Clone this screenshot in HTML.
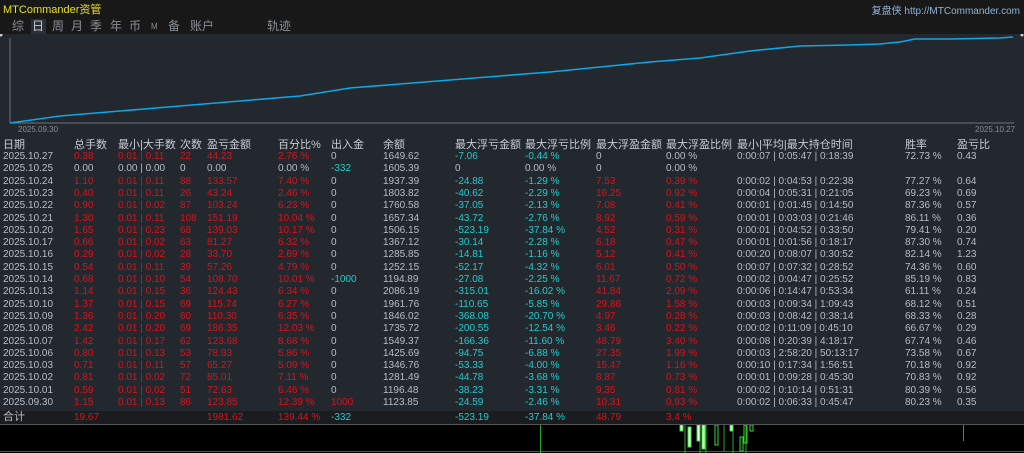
<!DOCTYPE html>
<html><head><meta charset="utf-8"><style>
*{margin:0;padding:0;box-sizing:border-box}
body{width:1024px;height:453px;background:#23272e;font-family:"Liberation Sans","Noto Sans CJK SC",sans-serif;font-size:10px;color:#b8bcc4;position:relative;overflow:hidden}
#top{position:absolute;left:0;top:0;width:1024px;height:34px;background:#181818}
.a{position:absolute;white-space:nowrap}
.t{position:absolute;top:19px;color:#8a8e94;font-size:12px;line-height:15px}
.r{position:absolute;left:0;width:1024px;height:12.3px;line-height:12.3px}
.r span{position:absolute;white-space:nowrap}
.c0{left:3px}.c1{left:74px}.c2{left:118px}.c3{left:180px}.c4{left:207px}.c5{left:278px}.c6{left:331px}.c7{left:383px}.c8{left:455px}.c9{left:525px}.c10{left:596px}.c11{left:666px}.c12{left:737px}.c13{left:905px}.c14{left:957px}
.R{color:#d8141c}.C{color:#22cccc}
.hd{font-size:11px;color:#c8ccd2}
</style></head><body>
<div id="top"></div>
<div class="a" style="left:3px;top:1px;color:#e8e020;font-size:11px">MTCommander资管</div>
<div class="a" style="right:4px;top:2px;color:#8fb4d8;font-size:10px">复盘侠 http://MTCommander.com</div>
<div class="a" style="left:31px;top:19px;width:15px;height:15px;background:#2a3038"></div>
<div class="t" style="left:12px">综</div>
<div class="t" style="left:32px;color:#c8ccd2">日</div>
<div class="t" style="left:52px">周</div>
<div class="t" style="left:71px">月</div>
<div class="t" style="left:90px">季</div>
<div class="t" style="left:110px">年</div>
<div class="t" style="left:129px">币</div>
<div class="t" style="left:151px;font-size:8px">M</div>
<div class="t" style="left:168px">备</div>
<div class="t" style="left:190px">账户</div>
<div class="t" style="left:267px">轨迹</div>
<svg class="a" style="left:0;top:34px" width="1024" height="100">
<line x1="10" y1="4" x2="10" y2="89" stroke="#707478" stroke-width="1"/>
<line x1="10" y1="89" x2="1014" y2="89" stroke="#707478" stroke-width="1"/>
<circle cx="1" cy="1" r="1.5" fill="#ccc"/><circle cx="1022" cy="1" r="1.5" fill="#ccc"/>
<polyline fill="none" stroke="#0aa8e8" stroke-width="1.6" points="10,89 60,82 120,77 180,72 240,67 300,62 350,54 400,50 450,46 500,42 550,38 600,33 650,28 700,24 750,17 800,12 850,11 880,10 900,8 915,5 950,5 1000,4 1013,3"/>
</svg>
<div class="a" style="left:18px;top:125px;color:#8a8e94;font-size:8px">2025.09.30</div>
<div class="a" style="left:975px;top:125px;color:#8a8e94;font-size:8px">2025.10.27</div>

<div class="r hd" style="top:139px"><span class="c0">日期</span><span class="c1">总手数</span><span class="c2">最小|大手数</span><span class="c3">次数</span><span class="c4">盈亏金额</span><span class="c5">百分比%</span><span class="c6">出入金</span><span class="c7">余额</span><span class="c8">最大浮亏金额</span><span class="c9">最大浮亏比例</span><span class="c10">最大浮盈金额</span><span class="c11">最大浮盈比例</span><span class="c12">最小|平均|最大持仓时间</span><span class="c13">胜率</span><span class="c14">盈亏比</span></div>

<div class="r" style="top:151px"><span class="c0">2025.10.27</span><span class="c1 R">0.38</span><span class="c2 R">0.01 | 0.11</span><span class="c3 R">22</span><span class="c4 R">44.23</span><span class="c5 R">2.76 %</span><span class="c6">0</span><span class="c7">1649.62</span><span class="c8 C">-7.06</span><span class="c9 C">-0.44 %</span><span class="c10">0</span><span class="c11">0.00 %</span><span class="c12">0:00:07 | 0:05:47 | 0:18:39</span><span class="c13">72.73 %</span><span class="c14">0.43</span></div>
<div class="r" style="top:163.3px"><span class="c0">2025.10.25</span><span class="c1">0.00</span><span class="c2">0.00 | 0.00</span><span class="c3">0</span><span class="c4">0.00</span><span class="c5">0.00 %</span><span class="c6 C">-332</span><span class="c7">1605.39</span><span class="c8">0</span><span class="c9">0.00 %</span><span class="c10">0</span><span class="c11">0.00 %</span></div>
<div class="r" style="top:175.6px"><span class="c0">2025.10.24</span><span class="c1 R">1.10</span><span class="c2 R">0.01 | 0.11</span><span class="c3 R">88</span><span class="c4 R">133.57</span><span class="c5 R">7.40 %</span><span class="c6">0</span><span class="c7">1937.39</span><span class="c8 C">-24.88</span><span class="c9 C">-1.29 %</span><span class="c10 R">7.53</span><span class="c11 R">0.39 %</span><span class="c12">0:00:02 | 0:04:53 | 0:22:38</span><span class="c13">77.27 %</span><span class="c14">0.64</span></div>
<div class="r" style="top:187.9px"><span class="c0">2025.10.23</span><span class="c1 R">0.40</span><span class="c2 R">0.01 | 0.11</span><span class="c3 R">26</span><span class="c4 R">43.24</span><span class="c5 R">2.46 %</span><span class="c6">0</span><span class="c7">1803.82</span><span class="c8 C">-40.62</span><span class="c9 C">-2.29 %</span><span class="c10 R">16.25</span><span class="c11 R">0.92 %</span><span class="c12">0:00:04 | 0:05:31 | 0:21:05</span><span class="c13">69.23 %</span><span class="c14">0.69</span></div>
<div class="r" style="top:200.2px"><span class="c0">2025.10.22</span><span class="c1 R">0.90</span><span class="c2 R">0.01 | 0.02</span><span class="c3 R">87</span><span class="c4 R">103.24</span><span class="c5 R">6.23 %</span><span class="c6">0</span><span class="c7">1760.58</span><span class="c8 C">-37.05</span><span class="c9 C">-2.13 %</span><span class="c10 R">7.08</span><span class="c11 R">0.41 %</span><span class="c12">0:00:01 | 0:01:45 | 0:14:50</span><span class="c13">87.36 %</span><span class="c14">0.57</span></div>
<div class="r" style="top:212.5px"><span class="c0">2025.10.21</span><span class="c1 R">1.30</span><span class="c2 R">0.01 | 0.11</span><span class="c3 R">108</span><span class="c4 R">151.19</span><span class="c5 R">10.04 %</span><span class="c6">0</span><span class="c7">1657.34</span><span class="c8 C">-43.72</span><span class="c9 C">-2.76 %</span><span class="c10 R">8.92</span><span class="c11 R">0.59 %</span><span class="c12">0:00:01 | 0:03:03 | 0:21:46</span><span class="c13">86.11 %</span><span class="c14">0.36</span></div>
<div class="r" style="top:224.8px"><span class="c0">2025.10.20</span><span class="c1 R">1.65</span><span class="c2 R">0.01 | 0.23</span><span class="c3 R">68</span><span class="c4 R">139.03</span><span class="c5 R">10.17 %</span><span class="c6">0</span><span class="c7">1506.15</span><span class="c8 C">-523.19</span><span class="c9 C">-37.84 %</span><span class="c10 R">4.52</span><span class="c11 R">0.31 %</span><span class="c12">0:00:01 | 0:04:52 | 0:33:50</span><span class="c13">79.41 %</span><span class="c14">0.20</span></div>
<div class="r" style="top:237.1px"><span class="c0">2025.10.17</span><span class="c1 R">0.66</span><span class="c2 R">0.01 | 0.02</span><span class="c3 R">63</span><span class="c4 R">81.27</span><span class="c5 R">6.32 %</span><span class="c6">0</span><span class="c7">1367.12</span><span class="c8 C">-30.14</span><span class="c9 C">-2.28 %</span><span class="c10 R">6.18</span><span class="c11 R">0.47 %</span><span class="c12">0:00:01 | 0:01:56 | 0:18:17</span><span class="c13">87.30 %</span><span class="c14">0.74</span></div>
<div class="r" style="top:249.4px"><span class="c0">2025.10.16</span><span class="c1 R">0.29</span><span class="c2 R">0.01 | 0.02</span><span class="c3 R">28</span><span class="c4 R">33.70</span><span class="c5 R">2.69 %</span><span class="c6">0</span><span class="c7">1285.85</span><span class="c8 C">-14.81</span><span class="c9 C">-1.16 %</span><span class="c10 R">5.12</span><span class="c11 R">0.41 %</span><span class="c12">0:00:20 | 0:08:07 | 0:30:52</span><span class="c13">82.14 %</span><span class="c14">1.23</span></div>
<div class="r" style="top:261.7px"><span class="c0">2025.10.15</span><span class="c1 R">0.54</span><span class="c2 R">0.01 | 0.11</span><span class="c3 R">39</span><span class="c4 R">57.26</span><span class="c5 R">4.79 %</span><span class="c6">0</span><span class="c7">1252.15</span><span class="c8 C">-52.17</span><span class="c9 C">-4.32 %</span><span class="c10 R">6.01</span><span class="c11 R">0.50 %</span><span class="c12">0:00:07 | 0:07:32 | 0:28:52</span><span class="c13">74.36 %</span><span class="c14">0.60</span></div>
<div class="r" style="top:274px"><span class="c0">2025.10.14</span><span class="c1 R">0.68</span><span class="c2 R">0.01 | 0.10</span><span class="c3 R">54</span><span class="c4 R">108.70</span><span class="c5 R">10.01 %</span><span class="c6 C">-1000</span><span class="c7">1194.89</span><span class="c8 C">-27.08</span><span class="c9 C">-2.25 %</span><span class="c10 R">11.67</span><span class="c11 R">0.72 %</span><span class="c12">0:00:02 | 0:04:47 | 0:25:52</span><span class="c13">85.19 %</span><span class="c14">0.83</span></div>
<div class="r" style="top:286.3px"><span class="c0">2025.10.13</span><span class="c1 R">1.14</span><span class="c2 R">0.01 | 0.15</span><span class="c3 R">36</span><span class="c4 R">124.43</span><span class="c5 R">6.34 %</span><span class="c6">0</span><span class="c7">2086.19</span><span class="c8 C">-315.01</span><span class="c9 C">-16.02 %</span><span class="c10 R">41.84</span><span class="c11 R">2.09 %</span><span class="c12">0:00:06 | 0:14:47 | 0:53:34</span><span class="c13">61.11 %</span><span class="c14">0.24</span></div>
<div class="r" style="top:298.6px"><span class="c0">2025.10.10</span><span class="c1 R">1.37</span><span class="c2 R">0.01 | 0.15</span><span class="c3 R">69</span><span class="c4 R">115.74</span><span class="c5 R">6.27 %</span><span class="c6">0</span><span class="c7">1961.76</span><span class="c8 C">-110.65</span><span class="c9 C">-5.85 %</span><span class="c10 R">29.86</span><span class="c11 R">1.58 %</span><span class="c12">0:00:03 | 0:09:34 | 1:09:43</span><span class="c13">68.12 %</span><span class="c14">0.51</span></div>
<div class="r" style="top:310.9px"><span class="c0">2025.10.09</span><span class="c1 R">1.36</span><span class="c2 R">0.01 | 0.20</span><span class="c3 R">60</span><span class="c4 R">110.30</span><span class="c5 R">6.35 %</span><span class="c6">0</span><span class="c7">1846.02</span><span class="c8 C">-368.08</span><span class="c9 C">-20.70 %</span><span class="c10 R">4.97</span><span class="c11 R">0.28 %</span><span class="c12">0:00:03 | 0:08:42 | 0:38:14</span><span class="c13">68.33 %</span><span class="c14">0.28</span></div>
<div class="r" style="top:323.2px"><span class="c0">2025.10.08</span><span class="c1 R">2.42</span><span class="c2 R">0.01 | 0.20</span><span class="c3 R">69</span><span class="c4 R">186.35</span><span class="c5 R">12.03 %</span><span class="c6">0</span><span class="c7">1735.72</span><span class="c8 C">-200.55</span><span class="c9 C">-12.54 %</span><span class="c10 R">3.46</span><span class="c11 R">0.22 %</span><span class="c12">0:00:02 | 0:11:09 | 0:45:10</span><span class="c13">66.67 %</span><span class="c14">0.29</span></div>
<div class="r" style="top:335.5px"><span class="c0">2025.10.07</span><span class="c1 R">1.42</span><span class="c2 R">0.01 | 0.17</span><span class="c3 R">62</span><span class="c4 R">123.68</span><span class="c5 R">8.68 %</span><span class="c6">0</span><span class="c7">1549.37</span><span class="c8 C">-166.36</span><span class="c9 C">-11.60 %</span><span class="c10 R">48.79</span><span class="c11 R">3.40 %</span><span class="c12">0:00:08 | 0:20:39 | 4:18:17</span><span class="c13">67.74 %</span><span class="c14">0.46</span></div>
<div class="r" style="top:347.8px"><span class="c0">2025.10.06</span><span class="c1 R">0.80</span><span class="c2 R">0.01 | 0.13</span><span class="c3 R">53</span><span class="c4 R">78.93</span><span class="c5 R">5.86 %</span><span class="c6">0</span><span class="c7">1425.69</span><span class="c8 C">-94.75</span><span class="c9 C">-6.88 %</span><span class="c10 R">27.35</span><span class="c11 R">1.99 %</span><span class="c12">0:00:03 | 2:58:20 | 50:13:17</span><span class="c13">73.58 %</span><span class="c14">0.67</span></div>
<div class="r" style="top:360.1px"><span class="c0">2025.10.03</span><span class="c1 R">0.71</span><span class="c2 R">0.01 | 0.11</span><span class="c3 R">57</span><span class="c4 R">65.27</span><span class="c5 R">5.09 %</span><span class="c6">0</span><span class="c7">1346.76</span><span class="c8 C">-53.33</span><span class="c9 C">-4.00 %</span><span class="c10 R">15.47</span><span class="c11 R">1.16 %</span><span class="c12">0:00:10 | 0:17:34 | 1:56:51</span><span class="c13">70.18 %</span><span class="c14">0.92</span></div>
<div class="r" style="top:372.4px"><span class="c0">2025.10.02</span><span class="c1 R">0.81</span><span class="c2 R">0.01 | 0.02</span><span class="c3 R">72</span><span class="c4 R">85.01</span><span class="c5 R">7.11 %</span><span class="c6">0</span><span class="c7">1281.49</span><span class="c8 C">-44.78</span><span class="c9 C">-3.68 %</span><span class="c10 R">8.87</span><span class="c11 R">0.73 %</span><span class="c12">0:00:01 | 0:09:28 | 0:45:30</span><span class="c13">70.83 %</span><span class="c14">0.92</span></div>
<div class="r" style="top:384.7px"><span class="c0">2025.10.01</span><span class="c1 R">0.59</span><span class="c2 R">0.01 | 0.02</span><span class="c3 R">51</span><span class="c4 R">72.63</span><span class="c5 R">6.46 %</span><span class="c6">0</span><span class="c7">1196.48</span><span class="c8 C">-38.23</span><span class="c9 C">-3.31 %</span><span class="c10 R">9.35</span><span class="c11 R">0.81 %</span><span class="c12">0:00:02 | 0:10:14 | 0:51:31</span><span class="c13">80.39 %</span><span class="c14">0.56</span></div>
<div class="r" style="top:397px"><span class="c0">2025.09.30</span><span class="c1 R">1.15</span><span class="c2 R">0.01 | 0.13</span><span class="c3 R">86</span><span class="c4 R">123.85</span><span class="c5 R">12.39 %</span><span class="c6 R">1000</span><span class="c7">1123.85</span><span class="c8 C">-24.59</span><span class="c9 C">-2.46 %</span><span class="c10 R">10.31</span><span class="c11 R">0.93 %</span><span class="c12">0:00:02 | 0:06:33 | 0:45:47</span><span class="c13">80.23 %</span><span class="c14">0.35</span></div>

<div class="a" style="left:0;top:411px;width:1024px;height:13px;background:#1a1c20"></div>
<div class="r" style="top:411px;height:13px;line-height:13px"><span class="c0" style="font-size:11px">合计</span><span class="c1 R">19.67</span><span class="c4 R">1981.62</span><span class="c5 R">139.44 %</span><span class="c6 C">-332</span><span class="c8 C">-523.19</span><span class="c9 C">-37.84 %</span><span class="c10 R">48.79</span><span class="c11 R">3.4 %</span></div>
<div class="a" style="left:0;top:424px;width:1024px;height:29px;background:#000;border-top:1px solid #555"></div>
<div class="a" style="left:0;top:451px;width:1024px;height:1px;background:#555"></div>
<svg class="a" style="left:0;top:425px" width="1024" height="28">
<g stroke="#22aa22" stroke-width="1">
<line x1="540.5" y1="0" x2="540.5" y2="28"/><line x1="963.5" y1="0" x2="963.5" y2="16"/>
<line x1="685" y1="0" x2="685" y2="28"/><line x1="700" y1="0" x2="700" y2="28"/><line x1="706" y1="0" x2="706" y2="28"/>
<line x1="724" y1="0" x2="724" y2="26"/><line x1="733" y1="0" x2="733" y2="28"/><line x1="746" y1="0" x2="746" y2="28"/>
</g>
<g fill="#e8ffe8" stroke="#33dd33"><rect x="680" y="0" width="3" height="6"/><rect x="688" y="2" width="3" height="20"/><rect x="697" y="0" width="3" height="16"/><rect x="702" y="0" width="3" height="24"/><rect x="730" y="0" width="3" height="6"/></g>
<g fill="none" stroke="#33dd33"><rect x="715" y="0" width="3" height="20"/><rect x="740" y="12" width="3" height="14"/><rect x="744" y="0" width="3" height="18"/><rect x="750" y="0" width="3" height="6"/></g>
</svg>
</body></html>
